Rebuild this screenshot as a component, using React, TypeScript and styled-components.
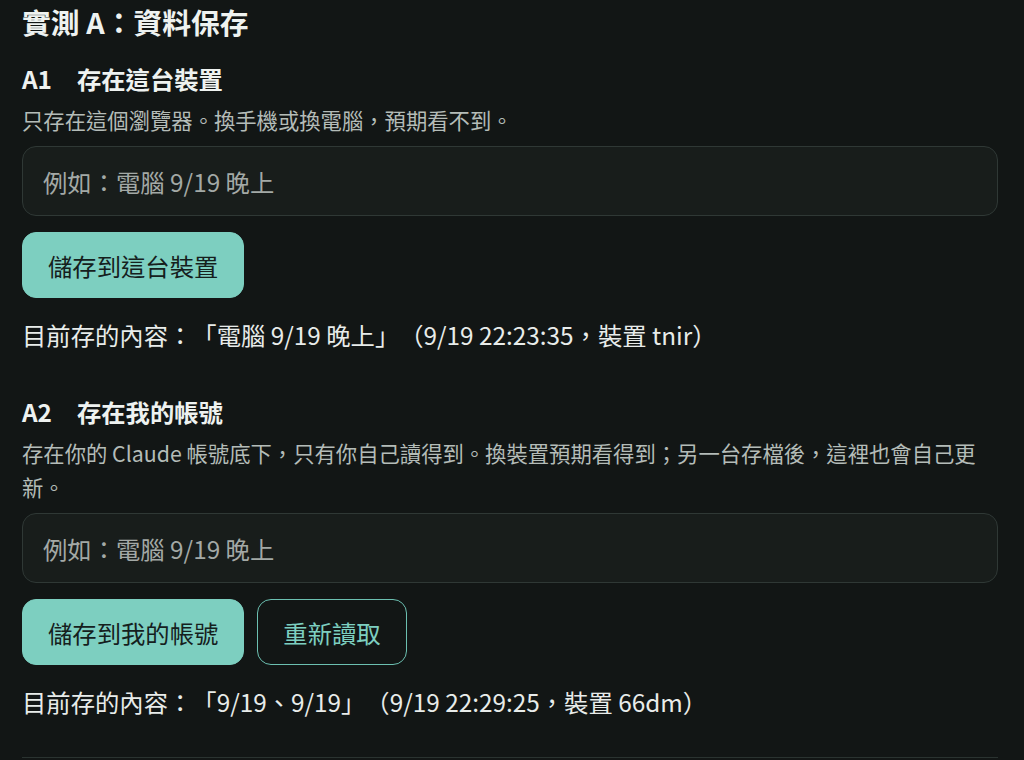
import { createGlobalStyle, styled } from "styled-components";

interface SectionType {
	code: string;
	title: string;
	desc: string;
	saveLabel: string;
	reload?: boolean;
	saved: string;
}

const Sections: SectionType[] = [
	{
		code: "A1",
		title: "存在這台裝置",
		desc: "只存在這個瀏覽器。換手機或換電腦，預期看不到。",
		saveLabel: "儲存到這台裝置",
		saved: "目前存的內容：「電腦 9/19 晚上」（9/19 22:23:35，裝置 tnir）",
	},
	{
		code: "A2",
		title: "存在我的帳號",
		desc: "存在你的 Claude 帳號底下，只有你自己讀得到。換裝置預期看得到；另一台存檔後，這裡也會自己更新。",
		saveLabel: "儲存到我的帳號",
		reload: true,
		saved: "目前存的內容：「9/19、9/19」（9/19 22:29:25，裝置 66dm）",
	},
];

const App = () => {
	return (
		<>
			<GlobalStyle />
			<Page>
				<PageTitle>實測 A：資料保存</PageTitle>
				{Sections.map((s, i) => (
					<Section key={s.code} $first={i === 0}>
						<Heading>
							<span>{s.code}</span>
							<span>{s.title}</span>
						</Heading>
						<Desc>{s.desc}</Desc>
						<Field placeholder="例如：電腦 9/19 晚上" />
						<ButtonRow>
							<Button>{s.saveLabel}</Button>
							{s.reload && <Button $outline>重新讀取</Button>}
						</ButtonRow>
						<Saved>{s.saved}</Saved>
					</Section>
				))}
				<Divider />
			</Page>
		</>
	);
};
export default App;

const GlobalStyle = createGlobalStyle`
	html, body {
		margin: 0;
		padding: 0;
		background: #121615;
	}
	body {
		font-family: "Noto Sans CJK TC", "Noto Sans", sans-serif;
		color: #e8ecea;
		text-spacing-trim: space-all;
	}
`;

const Page = styled.main`
	display: flex;
	flex-direction: column;
	padding: 0 26px 0 22px;
	height: 760px;
	overflow: hidden;
`;

const PageTitle = styled.h1`
	margin: 0;
	font-size: 28.8px;
	line-height: 44px;
	font-weight: 700;
	color: #eef2f0;
`;

const Section = styled.section<{ $first?: boolean }>`
	display: flex;
	flex-direction: column;
	margin-top: ${(p) => (p.$first ? "17px" : "41px")};
`;

const Heading = styled.h2`
	display: flex;
	gap: 25px;
	margin: 0;
	font-size: 24.33px;
	line-height: 36px;
	font-weight: 700;
	color: #eef2f0;
`;

const Desc = styled.p`
	margin: 6px 0 0;
	font-size: 21.33px;
	line-height: 34px;
	color: #b4bcb8;
`;

const Field = styled.input`
	box-sizing: border-box;
	margin-top: 9px;
	width: 100%;
	height: 70px;
	padding: 0 20px;
	border: 1.5px solid #2f3835;
	border-radius: 14px;
	background: #181d1b;
	font-family: inherit;
	font-size: 24.33px;
	color: #e8ecea;
	outline: none;

	&::placeholder {
		color: #a3a9a6;
	}
`;

const ButtonRow = styled.div`
	display: flex;
	gap: 13px;
	margin-top: 16px;
`;

const Button = styled.button<{ $outline?: boolean }>`
	box-sizing: border-box;
	height: 66px;
	padding: 0 25px;
	border-radius: 14px;
	border: 1.5px solid ${(p) => (p.$outline ? "#6cc0b1" : "#7dcfc0")};
	background: ${(p) => (p.$outline ? "transparent" : "#7dcfc0")};
	color: ${(p) => (p.$outline ? "#7dcfc0" : "#15201d")};
	font-family: inherit;
	font-size: 24.33px;
	cursor: pointer;
`;

const Saved = styled.p`
	margin: 19px 0 0;
	font-size: 24.33px;
	line-height: 36px;
	color: #e8ecea;
`;

const Divider = styled.hr`
	margin: 37px 0 0;
	border: none;
	border-top: 1.5px solid #2a3330;
`;
